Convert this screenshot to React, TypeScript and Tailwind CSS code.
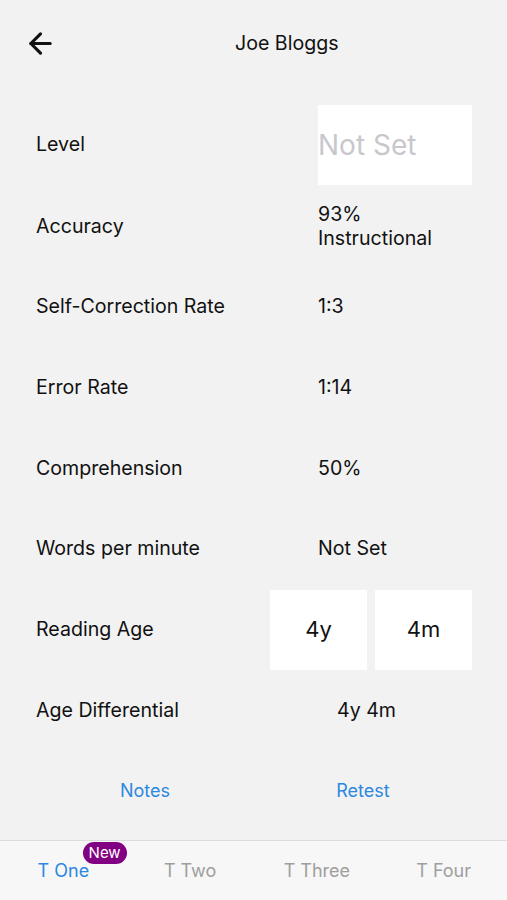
import { ArrowLeft } from "lucide-react";

const rows: { label: string; value: React.ReactNode }[] = [
  { label: "Accuracy", value: <div className="leading-[24px]">93%<br />Instructional</div> },
  { label: "Self-Correction Rate", value: "1:3" },
  { label: "Error Rate", value: "1:14" },
  { label: "Comprehension", value: "50%" },
  { label: "Words per minute", value: "Not Set" },
];

const tabs = ["T One", "T Two", "T Three", "T Four"];

export default function App() {
  return (
    <div className="w-[507px] h-[900px] bg-[#f2f2f2] flex flex-col text-[#111] font-['Inter',sans-serif]">
      <header className="h-[88px] relative flex items-center pl-[235px]">
        <ArrowLeft className="absolute left-[24px] top-[27px] h-[33px] w-[33px]" strokeWidth={2.3} />
        <span className="text-[19.6px] -mt-[1px]">Joe Bloggs</span>
      </header>

      <div className="pl-[36px] pr-[35px] pt-[17px] text-[19.6px] flex flex-col">
        <div className="h-[80px] flex items-center mb-[1px]">
          <div className="flex-1">Level</div>
          <div className="w-[154px] h-[80px] bg-white flex items-center text-[28px] text-[#c7c7cc]">Not Set</div>
        </div>
        {rows.map((r) => (
          <div key={r.label} className="h-[80.7px] flex items-center">
            <div className="flex-1">{r.label}</div>
            <div className="w-[154px]">{r.value}</div>
          </div>
        ))}
        <div className="h-[80.7px] flex items-center">
          <div className="flex-1">Reading Age</div>
          <div className="flex gap-[8px]">
            <div className="w-[97px] h-[80px] bg-white flex items-center justify-center text-[22px]">4y</div>
            <div className="w-[97px] h-[80px] bg-white flex items-center justify-center text-[22px]">4m</div>
          </div>
        </div>
        <div className="h-[80.7px] flex items-center">
          <div className="flex-1">Age Differential</div>
          <div className="w-[202px] pl-[67px]">4y 4m</div>
        </div>
        <div className="h-[80px] flex items-center text-[18px] text-[#2c88e0]">
          <div className="flex-1 text-center">Notes</div>
          <div className="flex-1 text-center">Retest</div>
        </div>
      </div>

      <div className="flex-1" />

      <nav className="h-[60px] border-t border-[#dcdcdc] bg-[#f7f7f7] grid grid-cols-4 text-[18px]">
        {tabs.map((t, i) => (
          <div key={t} className="flex items-center justify-center">
            <span className={`relative ${i === 0 ? "text-[#2c88e0]" : "text-[#9e9e9e]"}`}>
              {t}
              {i === 0 && (
                <span className="absolute left-[45px] -top-[15px] bg-[#820082] text-white text-[15px] leading-[22px] px-[6px] rounded-full">
                  New
                </span>
              )}
            </span>
          </div>
        ))}
      </nav>
    </div>
  );
}
